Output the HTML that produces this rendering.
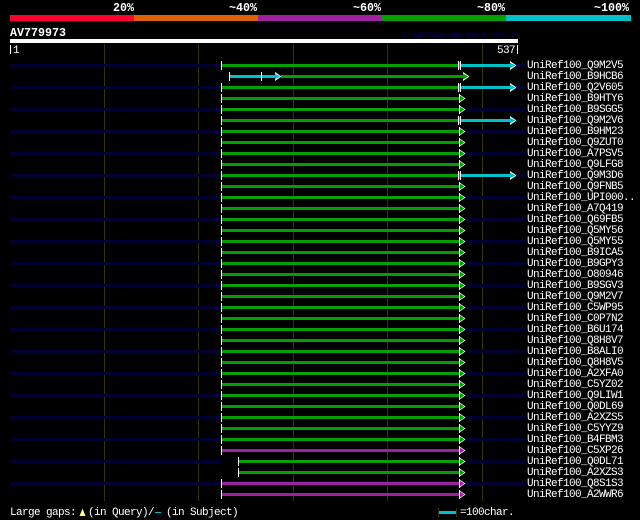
<!DOCTYPE html>
<html><head><meta charset="utf-8">
<style>
html,body{margin:0;padding:0;background:#000;width:640px;height:520px;overflow:hidden}
svg{display:block}
text{font-family:"Liberation Mono",monospace;white-space:pre}
.l{fill:#fff;font-size:11px;letter-spacing:-.6px}
.h{fill:#fff;font-size:11.67px;font-weight:bold}
.r rect{shape-rendering:crispEdges}
</style></head><body>
<svg width="640" height="520" viewBox="0 0 640 520" xmlns="http://www.w3.org/2000/svg">
<defs>
<g id="hg"><polygon points="459,-3 465.5,1.5 459,6" fill="#fff"/><polygon points="460,-1.5 464.3,1.5 460,4.5" fill="#00a000"/></g>
<g id="hp"><polygon points="459,-3 465.5,1.5 459,6" fill="#fff"/><polygon points="460,-1.5 464.3,1.5 460,4.5" fill="#a020a0"/></g>
<g id="n" class="r"><rect x="10" y="0" width="211" height="3" fill="#000033"/><rect x="465" y="0" width="60" height="3" fill="#000033"/></g>
<g id="g" class="r"><rect x="221" y="-3" width="1" height="9" fill="#fff"/><rect x="222" y="0" width="238" height="3" fill="#00a000"/><rect x="459" y="-3" width="1" height="9" fill="#fff"/></g>
<g id="p" class="r"><rect x="221" y="-3" width="1" height="9" fill="#fff"/><rect x="222" y="0" width="238" height="3" fill="#a020a0"/><rect x="459" y="-3" width="1" height="9" fill="#fff"/></g>
<g id="s" class="r"><rect x="238" y="-3" width="1" height="9" fill="#fff"/><rect x="239" y="0" width="221" height="3" fill="#00a000"/><rect x="459" y="-3" width="1" height="9" fill="#fff"/></g>
<g id="c"><g class="r"><rect x="221" y="-3" width="1" height="9" fill="#fff"/><rect x="222" y="0" width="237" height="3" fill="#00a000"/><rect x="458" y="-3" width="1" height="9" fill="#fff"/><rect x="459" y="-2" width="1" height="7" fill="#00a000"/><rect x="460" y="-3" width="1" height="9" fill="#fff"/><rect x="461" y="0" width="49" height="3" fill="#00c0c8"/></g><polygon points="510,-3 516.5,1.5 510,6" fill="#fff"/><polygon points="510,-1.5 515.3,1.5 510,4.5" fill="#00c0c8"/></g>
</defs>
<rect width="640" height="520" fill="#000"/>
<text class="h" x="113" y="11">20%</text>
<text class="h" x="229" y="11">~40%</text>
<text class="h" x="353" y="11">~60%</text>
<text class="h" x="477" y="11">~80%</text>
<text class="h" x="594" y="11">~100%</text>
<g class="r">
<rect x="10" y="15" width="124" height="6" fill="#ff0033"/>
<rect x="134" y="15" width="124" height="6" fill="#e06000"/>
<rect x="258" y="15" width="124" height="6" fill="#a020a0"/>
<rect x="382" y="15" width="124" height="6" fill="#00a000"/>
<rect x="506" y="15" width="125" height="6" fill="#00c0c8"/>
<rect x="10" y="39" width="508" height="4" fill="#fff"/>
<rect x="10" y="45" width="1" height="9" fill="#fff"/>
<rect x="517" y="45" width="1" height="9" fill="#fff"/>
<rect x="104" y="44" width="1" height="457" fill="#333300"/>
<rect x="198" y="44" width="1" height="457" fill="#333300"/>
<rect x="293" y="44" width="1" height="457" fill="#333300"/>
<rect x="387" y="44" width="1" height="457" fill="#333300"/>
<rect x="482" y="44" width="1" height="457" fill="#333300"/>
</g>
<text class="h" x="10" y="36">AV779973</text>
<text x="402" y="37" style="font-size:8.2px;font-weight:bold;fill:#000050">AlignView.pm Beta rel.7</text>
<text class="l" x="13" y="53">1</text>
<text class="l" x="497" y="53">537</text>

<use href="#n" y="64"/><use href="#n" y="86"/><use href="#n" y="108"/><use href="#n" y="130"/><use href="#n" y="152"/><use href="#n" y="174"/><use href="#n" y="196"/><use href="#n" y="218"/><use href="#n" y="240"/><use href="#n" y="262"/><use href="#n" y="284"/><use href="#n" y="306"/><use href="#n" y="328"/><use href="#n" y="350"/><use href="#n" y="372"/><use href="#n" y="394"/><use href="#n" y="416"/><use href="#n" y="438"/><use href="#n" y="460"/><use href="#n" y="482"/>

<use href="#c" y="64"/>
<g class="r"><rect x="229" y="72" width="1" height="9" fill="#fff"/><rect x="230" y="75" width="45" height="3" fill="#00c0c8"/><rect x="261" y="72" width="1" height="9" fill="#fff"/><rect x="281" y="75" width="183" height="3" fill="#00a000"/></g>
<polygon points="275,72 281.5,76.5 275,81" fill="#fff"/><polygon points="275,73.5 280.3,76.5 275,79.5" fill="#00c0c8"/>
<polygon points="463,72 469.5,76.5 463,81" fill="#fff"/><polygon points="463,73.5 468.3,76.5 463,79.5" fill="#00a000"/>
<use href="#c" y="86"/>
<use href="#g" y="97"/><use href="#hg" y="97"/>
<use href="#g" y="108"/><use href="#hg" y="108"/>
<use href="#c" y="119"/>
<use href="#g" y="130"/><use href="#hg" y="130"/>
<use href="#g" y="141"/><use href="#hg" y="141"/>
<use href="#g" y="152"/><use href="#hg" y="152"/>
<use href="#g" y="163"/><use href="#hg" y="163"/>
<use href="#c" y="174"/>
<use href="#g" y="185"/><use href="#hg" y="185"/>
<use href="#g" y="196"/><use href="#hg" y="196"/>
<use href="#g" y="207"/><use href="#hg" y="207"/>
<use href="#g" y="218"/><use href="#hg" y="218"/>
<use href="#g" y="229"/><use href="#hg" y="229"/>
<use href="#g" y="240"/><use href="#hg" y="240"/>
<use href="#g" y="251"/><use href="#hg" y="251"/>
<use href="#g" y="262"/><use href="#hg" y="262"/>
<use href="#g" y="273"/><use href="#hg" y="273"/>
<use href="#g" y="284"/><use href="#hg" y="284"/>
<use href="#g" y="295"/><use href="#hg" y="295"/>
<use href="#g" y="306"/><use href="#hg" y="306"/>
<use href="#g" y="317"/><use href="#hg" y="317"/>
<use href="#g" y="328"/><use href="#hg" y="328"/>
<use href="#g" y="339"/><use href="#hg" y="339"/>
<use href="#g" y="350"/><use href="#hg" y="350"/>
<use href="#g" y="361"/><use href="#hg" y="361"/>
<use href="#g" y="372"/><use href="#hg" y="372"/>
<use href="#g" y="383"/><use href="#hg" y="383"/>
<use href="#g" y="394"/><use href="#hg" y="394"/>
<use href="#g" y="405"/><use href="#hg" y="405"/>
<use href="#g" y="416"/><use href="#hg" y="416"/>
<use href="#g" y="427"/><use href="#hg" y="427"/>
<use href="#g" y="438"/><use href="#hg" y="438"/>
<use href="#p" y="449"/><use href="#hp" y="449"/>
<use href="#s" y="460"/><use href="#hg" y="460"/>
<use href="#s" y="471"/><use href="#hg" y="471"/>
<use href="#p" y="482"/><use href="#hp" y="482"/>
<use href="#p" y="493"/><use href="#hp" y="493"/>

<text class="l" x="527" y="68">UniRef100_Q9M2V5</text>
<text class="l" x="527" y="79">UniRef100_B9HCB6</text>
<text class="l" x="527" y="90">UniRef100_Q2V605</text>
<text class="l" x="527" y="101">UniRef100_B9HTY6</text>
<text class="l" x="527" y="112">UniRef100_B9SGG5</text>
<text class="l" x="527" y="123">UniRef100_Q9M2V6</text>
<text class="l" x="527" y="134">UniRef100_B9HM23</text>
<text class="l" x="527" y="145">UniRef100_Q9ZUT0</text>
<text class="l" x="527" y="156">UniRef100_A7PSV5</text>
<text class="l" x="527" y="167">UniRef100_Q9LFG8</text>
<text class="l" x="527" y="178">UniRef100_Q9M3D6</text>
<text class="l" x="527" y="189">UniRef100_Q9FNB5</text>
<text class="l" x="527" y="200">UniRef100_UPI000..</text>
<text class="l" x="527" y="211">UniRef100_A7Q419</text>
<text class="l" x="527" y="222">UniRef100_Q69FB5</text>
<text class="l" x="527" y="233">UniRef100_Q5MY56</text>
<text class="l" x="527" y="244">UniRef100_Q5MY55</text>
<text class="l" x="527" y="255">UniRef100_B9ICA5</text>
<text class="l" x="527" y="266">UniRef100_B9GPY3</text>
<text class="l" x="527" y="277">UniRef100_O80946</text>
<text class="l" x="527" y="288">UniRef100_B9SGV3</text>
<text class="l" x="527" y="299">UniRef100_Q9M2V7</text>
<text class="l" x="527" y="310">UniRef100_C5WP95</text>
<text class="l" x="527" y="321">UniRef100_C0P7N2</text>
<text class="l" x="527" y="332">UniRef100_B6U174</text>
<text class="l" x="527" y="343">UniRef100_Q8H8V7</text>
<text class="l" x="527" y="354">UniRef100_B8ALI0</text>
<text class="l" x="527" y="365">UniRef100_Q8H8V5</text>
<text class="l" x="527" y="376">UniRef100_A2XFA0</text>
<text class="l" x="527" y="387">UniRef100_C5YZ02</text>
<text class="l" x="527" y="398">UniRef100_Q9LIW1</text>
<text class="l" x="527" y="409">UniRef100_Q0DL69</text>
<text class="l" x="527" y="420">UniRef100_A2XZS5</text>
<text class="l" x="527" y="431">UniRef100_C5YYZ9</text>
<text class="l" x="527" y="442">UniRef100_B4FBM3</text>
<text class="l" x="527" y="453">UniRef100_C5XP26</text>
<text class="l" x="527" y="464">UniRef100_Q0DL71</text>
<text class="l" x="527" y="475">UniRef100_A2XZS3</text>
<text class="l" x="527" y="486">UniRef100_Q8S1S3</text>
<text class="l" x="527" y="497">UniRef100_A2WWR6</text>

<text class="l" x="10" y="515">Large gaps:</text>
<polygon points="82.5,508.5 85.5,516 79.5,516" fill="#ffff80"/>
<text class="l" x="88" y="515">(in Query)/</text>
<rect x="155" y="512" width="6" height="1" fill="#00c0c8" shape-rendering="crispEdges"/>
<text class="l" x="166" y="515">(in Subject)</text>
<g class="r"><rect x="438" y="508" width="1" height="9" fill="#333300"/><rect x="456" y="508" width="1" height="9" fill="#333300"/><rect x="439" y="511" width="17" height="3" fill="#00c0c8"/></g>
<text class="l" x="460" y="515">=100char.</text>
</svg>
</body></html>
